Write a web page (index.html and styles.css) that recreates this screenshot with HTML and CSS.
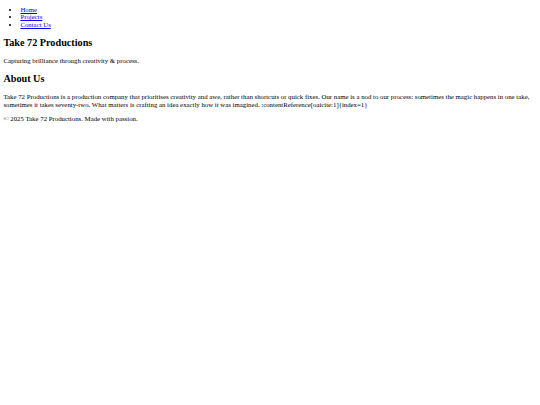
FILE: index.html
```html
<!DOCTYPE html>
<html lang="en">
<head>
<meta charset="utf-8">
<title>Take 72 Productions</title>
<link rel="stylesheet" href="styles.css">
</head>
<body class="page">
<nav class="nav">
  <ul class="nav-list">
    <li class="nav-item"><a class="nav-link" href="#">Home</a></li>
    <li class="nav-item"><a class="nav-link" href="#">Projects</a></li>
    <li class="nav-item"><a class="nav-link" href="#">Contact Us</a></li>
  </ul>
</nav>
<header class="hero">
  <h1 class="title">Take 72 Productions</h1>
  <p class="text">Capturing brilliance through creativity &amp; process.</p>
</header>
<section class="about">
  <h2 class="subtitle">About Us</h2>
  <p class="text">Take 72 Productions is a production company that prioritises creativity and awe, rather than shortcuts or quick fixes. Our name is a nod to our process: sometimes the magic happens in one take, sometimes it takes seventy-two. What matters is crafting an idea exactly how it was imagined. :contentReference[oaicite:1]{index=1}</p>
</section>
<footer class="footer">
  <p class="text">&copy; 2025 Take 72 Productions. Made with passion.</p>
</footer>
</body>
</html>
```

FILE: styles.css
```css
html { background: #ffffff; }
.page {
  margin: 0 3.4px 3.4px;
  font-family: "Liberation Serif", "Times New Roman", serif;
  font-size: 6.8px;
  line-height: 7.6px;
  color: #000000;
}
.nav-list {
  margin: 5.8px 0 7.2px;
  padding-left: 17px;
  list-style: disc;
}
.nav-item { line-height: 7.6px; }
.nav-link { color: #0000ee; text-decoration: underline; }
.title {
  font-size: 10.2px;
  line-height: 11.6px;
  font-weight: bold;
  margin: 8.8px 0 8.4px;
}
.subtitle {
  font-size: 10.2px;
  line-height: 11.6px;
  font-weight: bold;
  margin: 8.4px 0;
}
.text { margin: 6.8px 0; }
```
